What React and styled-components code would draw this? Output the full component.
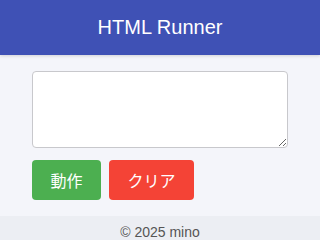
import React, { useState } from "react";
import styled, { createGlobalStyle } from "styled-components";

const GlobalStyle = createGlobalStyle`
  html, body {
    margin: 0;
    padding: 0;
    background: #f4f5fa;
    font-family: "Liberation Sans", Arial, "Noto Sans CJK JP", sans-serif;
  }
`;

const Header = styled.header`
  height: 55px;
  background: #3f51b5;
  color: #fff;
  display: flex;
  align-items: center;
  justify-content: center;
  font-size: 20px;
  box-shadow: 0 1px 3px rgba(0, 0, 0, 0.15);
`;

const Main = styled.main`
  padding: 16px 32px;
  display: flex;
  flex-direction: column;
  gap: 12px;
`;

const Editor = styled.textarea`
  box-sizing: border-box;
  width: 100%;
  height: 77px;
  margin: 0;
  border: 1px solid #c8c8cc;
  border-radius: 4px;
  background: #fff;
  font-family: "Liberation Mono", monospace;
  font-size: 13px;
  padding: 6px 8px;
`;

const Actions = styled.div`
  display: flex;
  gap: 8px;
`;

const Button = styled.button`
  height: 40px;
  padding: 0 18px;
  border: none;
  border-radius: 4px;
  color: #fff;
  font-size: 16px;
  font-family: "Liberation Sans", "Noto Sans CJK JP", sans-serif;
  background: ${(p) => (p.$variant === "danger" ? "#f44336" : "#4caf50")};
  min-width: ${(p) => (p.$variant === "danger" ? "85px" : "69px")};
  cursor: pointer;
`;

const Footer = styled.footer`
  height: 32px;
  background: #eceef3;
  color: #555;
  font-size: 14px;
  display: flex;
  align-items: center;
  justify-content: center;
  box-sizing: border-box;
`;

export default function App() {
  const [code, setCode] = useState("");
  return (
    <>
      <GlobalStyle />
      <Header>HTML Runner</Header>
      <Main>
        <Editor value={code} onChange={(e) => setCode(e.target.value)} />
        <Actions>
          <Button>動作</Button>
          <Button $variant="danger" onClick={() => setCode("")}>
            クリア
          </Button>
        </Actions>
      </Main>
      <Footer>© 2025 mino</Footer>
    </>
  );
}
